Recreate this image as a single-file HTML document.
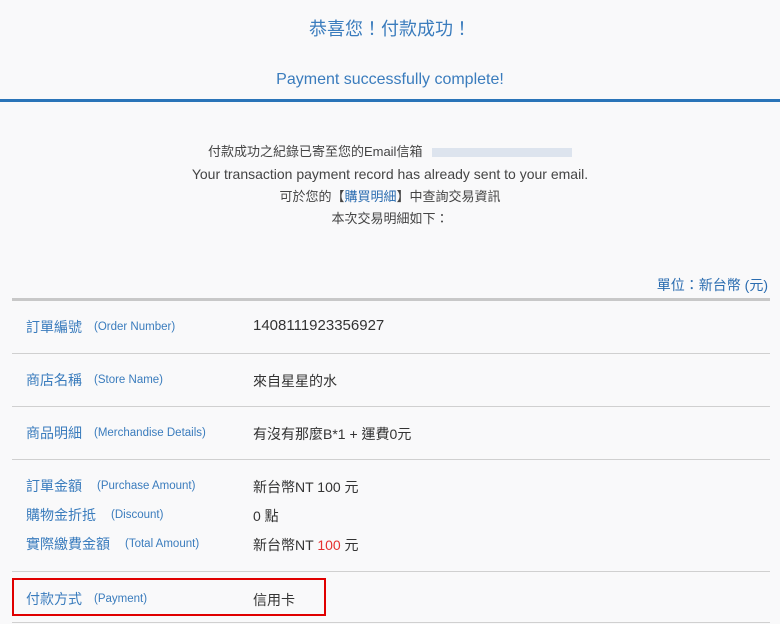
<!DOCTYPE html>
<html><head><meta charset="utf-8"><style>
body{margin:0;width:780px;height:624px;background:#f9f9fa;font-family:"Liberation Sans","Noto Sans CJK TC",sans-serif;position:relative;overflow:hidden}
.a{position:absolute;white-space:nowrap}
.c{left:0;width:780px;text-align:center}
.lb{color:#3a7cbd;font-size:14px}
.en{color:#3a7cbd;font-size:11.5px}
.v{color:#333;font-size:14px}
.hr{position:absolute;left:12px;width:758px;height:1px;background:#d0d0d0}
</style></head><body>
<div class="a c" style="top:15px;font-size:18px;color:#3a7cbd">恭喜您！付款成功！</div>
<div class="a c" style="top:71px;font-size:16px;color:#3a7cbd">Payment successfully complete!</div>
<div class="a" style="left:0;top:99px;width:780px;height:3px;background:#2a74b8"></div>
<div class="a c" style="top:141px;font-size:13px;color:#444;line-height:22px">付款成功之紀錄已寄至您的Email信箱 <span style="display:inline-block;width:140px;height:9px;background:#dde4ee;vertical-align:middle;margin-left:6px"></span><br><span style="font-size:14px">Your transaction payment record has already sent to your email.</span><br>可於您的【<span style="color:#2a6cb0">購買明細</span>】中查詢交易資訊<br>本次交易明細如下：</div>
<div class="a" style="right:12px;top:275px;font-size:14px;color:#2a6cb0">單位：新台幣 (元)</div>
<div class="a" style="left:12px;top:298px;width:758px;height:3px;background:#c8c8c8"></div>
<div class="a lb" style="left:26px;top:317px">訂單編號</div><div class="a en" style="left:94px;top:321px">(Order Number)</div><div class="a v" style="left:253px;top:317px;font-size:15px">1408111923356927</div>
<div class="hr" style="top:353px"></div>
<div class="a lb" style="left:26px;top:370px">商店名稱</div><div class="a en" style="left:94px;top:374px">(Store Name)</div><div class="a v" style="left:253px;top:371px">來自星星的水</div>
<div class="hr" style="top:406px"></div>
<div class="a lb" style="left:26px;top:423px">商品明細</div><div class="a en" style="left:94px;top:427px">(Merchandise Details)</div><div class="a v" style="left:253px;top:424px">有沒有那麼B*1 + 運費0元</div>
<div class="hr" style="top:459px"></div>
<div class="a lb" style="left:26px;top:476px">訂單金額</div><div class="a en" style="left:97px;top:480px">(Purchase Amount)</div><div class="a v" style="left:253px;top:477px">新台幣NT 100 元</div>
<div class="a lb" style="left:26px;top:505px">購物金折抵</div><div class="a en" style="left:111px;top:509px">(Discount)</div><div class="a v" style="left:253px;top:506px">0 點</div>
<div class="a lb" style="left:26px;top:534px">實際繳費金額</div><div class="a en" style="left:125px;top:538px">(Total Amount)</div><div class="a v" style="left:253px;top:535px">新台幣NT <span style="color:#e53030">100</span> 元</div>
<div class="hr" style="top:571px"></div>
<div class="a" style="left:12px;top:578px;width:310px;height:34px;border:2px solid #e00000"></div>
<div class="a lb" style="left:26px;top:589px">付款方式</div><div class="a en" style="left:94px;top:593px">(Payment)</div><div class="a v" style="left:253px;top:590px">信用卡</div>
<div class="hr" style="top:622px"></div>
</body></html>
